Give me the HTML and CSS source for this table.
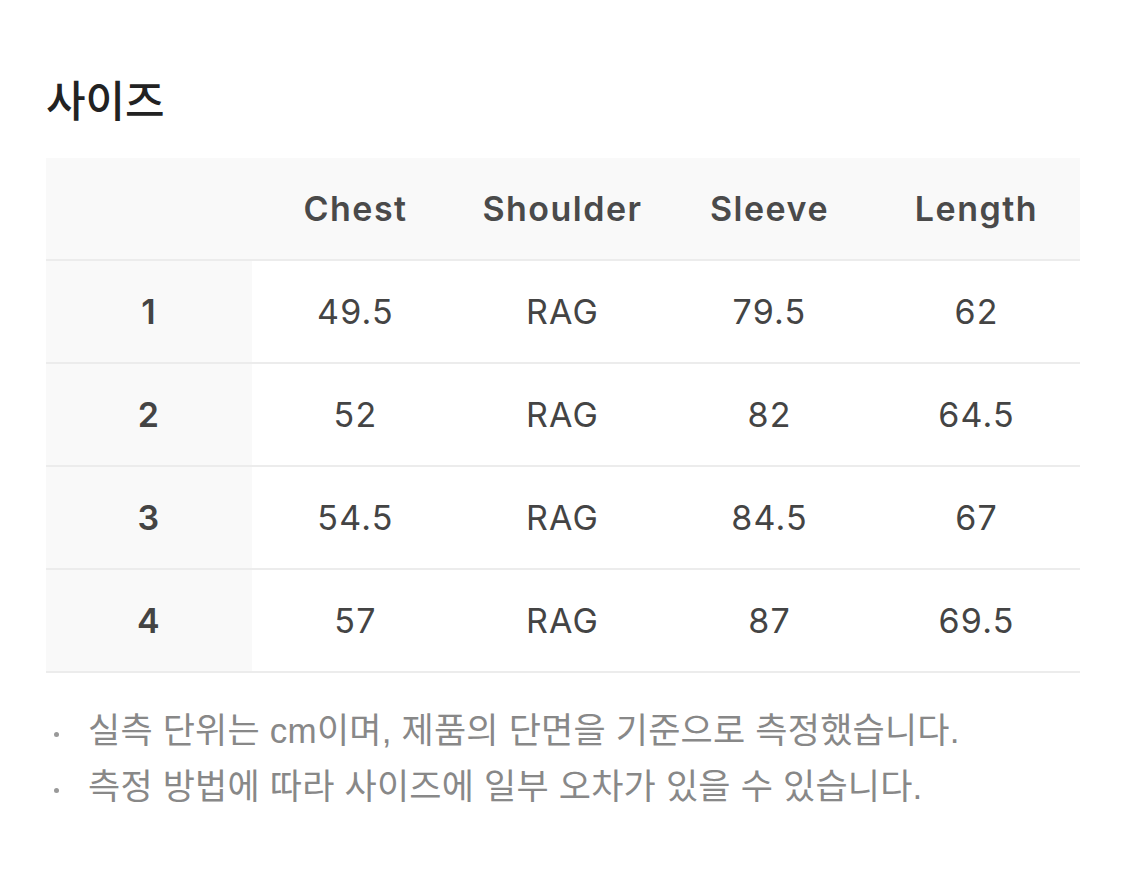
FILE: index.html
```html
<!DOCTYPE html>
<html lang="ko">
<head>
<meta charset="utf-8">
<link rel="stylesheet" href="styles.css">
</head>
<body>
<section class="size">
  <h2 class="title">사이즈</h2>
  <table class="tbl">
    <thead>
      <tr><th class="lab"></th><th>Chest</th><th>Shoulder</th><th>Sleeve</th><th>Length</th></tr>
    </thead>
    <tbody>
      <tr><th class="lab">1</th><td>49.5</td><td>RAG</td><td>79.5</td><td>62</td></tr>
      <tr><th class="lab">2</th><td>52</td><td>RAG</td><td>82</td><td>64.5</td></tr>
      <tr><th class="lab">3</th><td>54.5</td><td>RAG</td><td>84.5</td><td>67</td></tr>
      <tr><th class="lab">4</th><td>57</td><td>RAG</td><td>87</td><td>69.5</td></tr>
    </tbody>
  </table>
  <ul class="notes">
    <li>실측 단위는 cm이며, 제품의 단면을 기준으로 측정했습니다.</li>
    <li>측정 방법에 따라 사이즈에 일부 오차가 있을 수 있습니다.</li>
  </ul>
</section>
</body>
</html>
```
FILE: styles.css
```css
html, body { margin: 0; padding: 0; background: #fff; }
body { font-family: "Inter", "Noto Sans CJK KR", sans-serif; }
.size { padding: 70px 45px 0 46px; }
.title {
  margin: 0;
  font-family: "Noto Sans CJK KR", sans-serif;
  font-size: 43px;
  font-weight: 500;
  color: #222;
  line-height: 56px;
}
.tbl {
  margin-top: 32px;
  width: 1034px;
  border-collapse: collapse;
  table-layout: fixed;
}
.tbl th, .tbl td {
  height: 101px;
  padding: 0;
  text-align: center;
  font-size: 34px;
  letter-spacing: 1.2px;
  color: #444;
  border-bottom: 2px solid #ececec;
}
.tbl thead th {
  background: #f9f9f9;
  font-weight: 600;
  letter-spacing: 1.5px;
  color: #4a4a4a;
}
.tbl td { font-weight: 400; background: #fff; }
.tbl th.lab { width: 206px; background: #f9f9f9; font-weight: 600; color: #444; }
.notes {
  list-style: none;
  margin: 30px 0 0;
  padding: 0;
}
.notes li {
  position: relative;
  padding-left: 42px;
  font-size: 35px;
  letter-spacing: 0.2px;
  line-height: 56px;
  color: #888;
  font-family: "Liberation Sans", "Noto Sans CJK KR", sans-serif;
}
.notes li::before {
  content: "";
  position: absolute;
  left: 8px;
  top: 29px;
  width: 5px;
  height: 5px;
  border-radius: 50%;
  background: #999;
}
```
